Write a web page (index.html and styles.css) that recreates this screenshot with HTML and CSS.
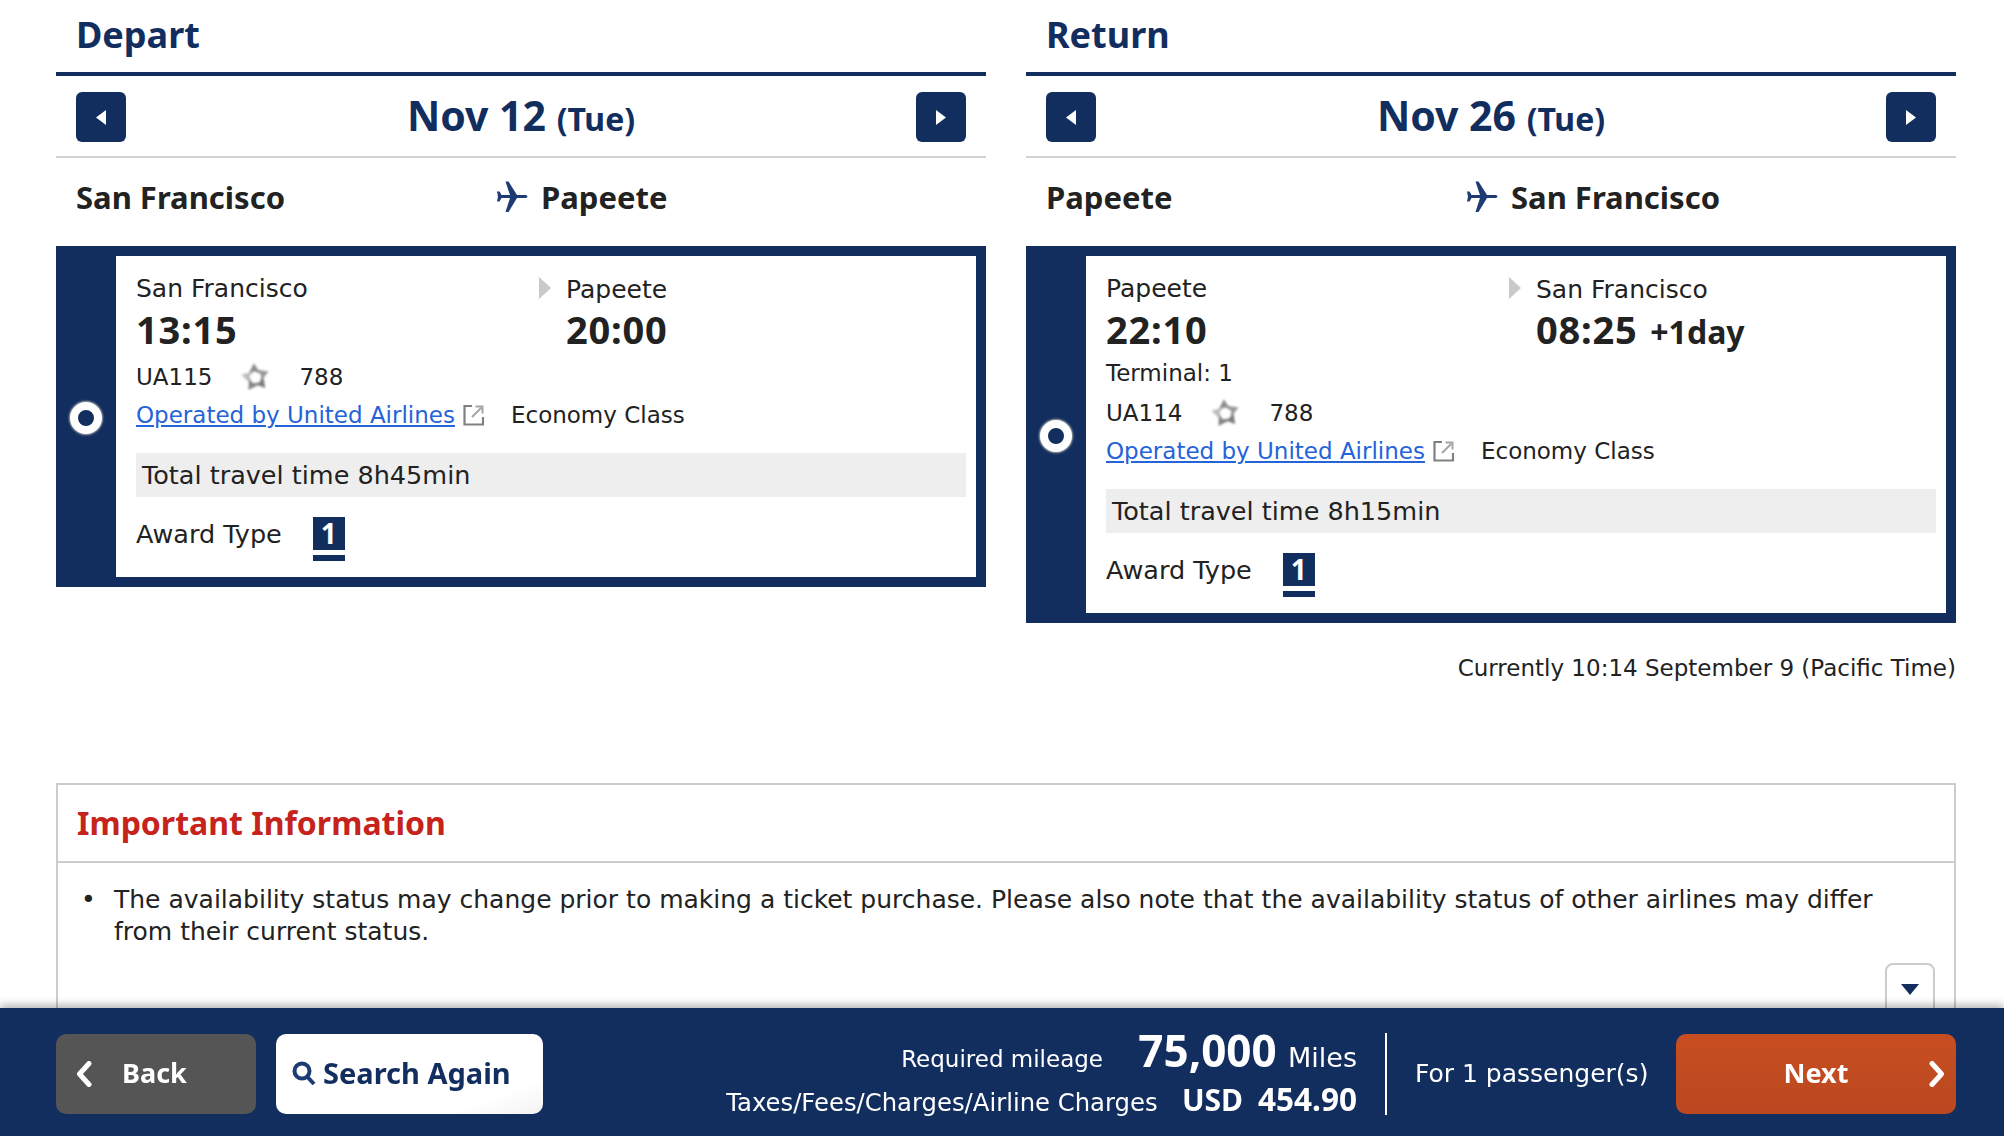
FILE: index.html
```html
<!DOCTYPE html>
<html lang="en">
<head>
    <meta charset="UTF-8">
    <meta name="viewport" content="width=device-width, initial-scale=1.0">
    <title>Select Flights</title>
    <link rel="stylesheet" href="styles.css">
</head>
<body>

    <svg class="defs" width="0" height="0">
        <defs>
            <symbol id="plane" viewBox="0 0 32 32">
                <path d="M0 10.5H2.5L4.5 14H13L8.5 .5H11.5L20 14H29Q32 15.5 29 17H20L11.5 31H8.5L13 17H4.5L2.5 20.5H0L1 15.5Z"/>
            </symbol>
            <symbol id="star" viewBox="0 0 30 30">
                <g filter="url(#soft)">
                    <polygon points="13.5,2 20,12 15,9.5 9,11" fill="#8c8c8c"/>
                    <polygon points="13.5,2 20,12 15,9.5 9,11" transform="rotate(72 15 15)" fill="#9a9a9a"/>
                    <polygon points="13.5,2 20,12 15,9.5 9,11" transform="rotate(144 15 15)" fill="#7c7c7c"/>
                    <polygon points="13.5,2 20,12 15,9.5 9,11" transform="rotate(216 15 15)" fill="#858585"/>
                    <polygon points="13.5,2 20,12 15,9.5 9,11" transform="rotate(288 15 15)" fill="#bcbcbc"/>
                </g>
            </symbol>
            <symbol id="external" viewBox="0 0 22 22">
                <path d="M9 2H1.5V20.5H20V13" fill="none" stroke="#808080" stroke-width="2.2"/>
                <path d="M9 13L18 4M12.5 2.5H19.5V9.5" fill="none" stroke="#a5a5a5" stroke-width="2"/>
            </symbol>
            <filter id="soft" x="-10%" y="-10%" width="120%" height="120%"><feGaussianBlur stdDeviation="1"/></filter>
        </defs>
    </svg>

    <div class="flights">

        <section class="leg">
            <h2 class="leg-title">Depart</h2>
            <div class="date-bar">
                <button class="nav-btn"><svg width="10" height="15" viewBox="0 0 10 15"><path d="M10 0V15L0 7.5Z"/></svg></button>
                <div class="date">Nov 12 <span class="weekday">(Tue)</span></div>
                <button class="nav-btn"><svg width="10" height="15" viewBox="0 0 10 15"><path d="M0 0V15L10 7.5Z"/></svg></button>
            </div>
            <div class="route">
                <span class="route-from">San Francisco</span>
                <svg class="route-plane"><use href="#plane"/></svg>
                <span>Papeete</span>
            </div>
            <div class="flight-card">
                <div class="card-side"><span class="radio"></span></div>
                <div class="card-body">
                    <div class="times">
                        <span class="place">San Francisco</span>
                        <svg class="stop-arrow" width="12" height="22" viewBox="0 0 12 22"><path d="M0 0L12 11L0 22Z"/></svg>
                        <span class="place place-arrive">Papeete</span>
                        <span class="time">13:15</span>
                        <span></span>
                        <span class="time">20:00</span>
                    </div>
                    <div class="flight-no">
                        <span>UA115</span>
                        <svg class="alliance"><use href="#star"/></svg>
                        <span>788</span>
                    </div>
                    <div class="operated">
                        <a href="#">Operated by United Airlines</a>
                        <svg class="ext-icon"><use href="#external"/></svg>
                        <span class="cabin">Economy Class</span>
                    </div>
                    <div class="travel-time">Total travel time 8h45min</div>
                    <div class="award">
                        <span class="award-label">Award Type</span>
                        <span class="award-badge">1</span>
                    </div>
                </div>
            </div>
        </section>

        <section class="leg">
            <h2 class="leg-title">Return</h2>
            <div class="date-bar">
                <button class="nav-btn"><svg width="10" height="15" viewBox="0 0 10 15"><path d="M10 0V15L0 7.5Z"/></svg></button>
                <div class="date">Nov 26 <span class="weekday">(Tue)</span></div>
                <button class="nav-btn"><svg width="10" height="15" viewBox="0 0 10 15"><path d="M0 0V15L10 7.5Z"/></svg></button>
            </div>
            <div class="route">
                <span class="route-from">Papeete</span>
                <svg class="route-plane"><use href="#plane"/></svg>
                <span>San Francisco</span>
            </div>
            <div class="flight-card">
                <div class="card-side"><span class="radio"></span></div>
                <div class="card-body">
                    <div class="times">
                        <span class="place">Papeete</span>
                        <svg class="stop-arrow" width="12" height="22" viewBox="0 0 12 22"><path d="M0 0L12 11L0 22Z"/></svg>
                        <span class="place place-arrive">San Francisco</span>
                        <span class="time">22:10</span>
                        <span></span>
                        <span class="time">08:25 <span class="plus-day">+1day</span></span>
                    </div>
                    <div class="terminal">Terminal: 1</div>
                    <div class="flight-no">
                        <span>UA114</span>
                        <svg class="alliance"><use href="#star"/></svg>
                        <span>788</span>
                    </div>
                    <div class="operated">
                        <a href="#">Operated by United Airlines</a>
                        <svg class="ext-icon"><use href="#external"/></svg>
                        <span class="cabin">Economy Class</span>
                    </div>
                    <div class="travel-time">Total travel time 8h15min</div>
                    <div class="award">
                        <span class="award-label">Award Type</span>
                        <span class="award-badge">1</span>
                    </div>
                </div>
            </div>
            <p class="current-time">Currently 10:14 September 9 (Pacific Time)</p>
        </section>

    </div>

    <section class="info-box">
        <h3 class="info-title">Important Information</h3>
        <ul class="info-list">
            <li>The availability status may change prior to making a ticket purchase. Please also note that the availability status of other airlines may differ from their current status.</li>
        </ul>
        <button class="more-btn"><svg width="18" height="11" viewBox="0 0 18 11"><path d="M0 0H18L9 11Z"/></svg></button>
    </section>

    <footer class="footer">
        <button class="btn btn-back">
            <svg class="chevron" width="16" height="26" viewBox="0 0 16 26"><path d="M13 2.5L3.5 13L13 23.5"/></svg>
            <span>Back</span>
        </button>
        <button class="btn btn-search">
            <svg width="24" height="26" viewBox="0 0 24 26"><circle cx="10" cy="10" r="7.5"/><path d="M15.5 16L22 23"/></svg>
            <span>Search Again</span>
        </button>
        <div class="summary">
            <div class="summary-line">
                <span class="label">Required mileage</span>
                <span class="miles">75,000</span>
                <span class="miles-unit">Miles</span>
            </div>
            <div class="summary-line">
                <span class="label label-long">Taxes/Fees/Charges/Airline Charges</span>
                <span class="price">USD<span class="price-value">454.90</span></span>
            </div>
        </div>
        <div class="passengers">For 1 passenger(s)</div>
        <button class="btn btn-next">
            <span>Next</span>
            <svg class="chevron" width="16" height="26" viewBox="0 0 16 26"><path d="M3 2.5L12.5 13L3 23.5"/></svg>
        </button>
    </footer>

</body>
</html>
```

FILE: styles.css
```css
* {
    box-sizing: border-box;
}

body {
    margin: 0;
    height: 1136px;
    overflow: hidden;
    background: white;
    color: #222;
    font-family: "DejaVu Sans", sans-serif;
    font-size: 23px;
}

.defs {
    position: absolute;
}

.flights {
    display: flex;
    gap: 40px;
    height: 783px;
    padding: 0 48px 0 56px;
}

.leg {
    flex: 1;
    min-width: 0;
}

.leg-title {
    height: 76px;
    margin: 0;
    padding: 13px 20px 0;
    border-bottom: 4px solid #122e5f;
    color: #122e5f;
    font-family: "Noto Sans", sans-serif;
    font-size: 36px;
    line-height: 44px;
}

.date-bar {
    display: flex;
    justify-content: space-between;
    align-items: center;
    height: 82px;
    padding: 2px 20px 0;
    border-bottom: 2px solid #d2d2d2;
}

.nav-btn {
    display: flex;
    justify-content: center;
    align-items: center;
    width: 50px;
    height: 50px;
    padding: 0;
    border: none;
    border-radius: 6px;
    background: #122e5f;
    fill: white;
}

.date {
    padding-bottom: 5px;
    color: #122e5f;
    font-family: "Noto Sans", sans-serif;
    font-size: 41px;
    font-weight: bold;
}

.weekday {
    font-size: 32px;
}

.route {
    display: flex;
    align-items: center;
    height: 88px;
    padding: 0 0 10px 20px;
    font-family: "Noto Sans", sans-serif;
    font-size: 31px;
    font-weight: bold;
}

.route-from {
    width: 421px;
}

.route-plane {
    width: 32px;
    height: 32px;
    margin-right: 12px;
    fill: #1c3c73;
}

.flight-card {
    display: flex;
    border: 10px solid #122e5f;
    border-left: none;
}

.card-side {
    display: flex;
    justify-content: center;
    align-items: center;
    flex: none;
    width: 60px;
    padding-top: 2px;
    background: #122e5f;
}

.radio {
    width: 32px;
    height: 32px;
    border: 8px solid white;
    border-radius: 50%;
    background: #122e5f;
    box-shadow: 0 0 2px 1px #aaa;
}

.card-body {
    flex: 1;
    min-width: 0;
    padding: 12px 10px 16px 20px;
}

.times {
    display: grid;
    grid-template-columns: 403px 27px 1fr;
    grid-template-rows: 40px 46px;
    align-items: center;
}

.place {
    font-size: 25px;
}

.place-arrive {
    padding-top: 3px;
}

.stop-arrow {
    fill: #c9c9c9;
}

.time {
    padding-bottom: 4px;
    font-family: "Noto Sans", sans-serif;
    font-size: 38px;
    font-weight: bold;
    letter-spacing: 0.8px;
}

.plus-day {
    margin-left: 2px;
    font-size: 32px;
    letter-spacing: 0;
}

.terminal {
    height: 36px;
    margin-top: 4px;
    line-height: 30px;
}

.flight-no {
    display: flex;
    align-items: center;
    gap: 27px;
    height: 38px;
    margin-top: 4px;
}

.terminal + .flight-no {
    margin-top: 0;
}

.alliance {
    width: 33px;
    height: 33px;
}

.operated {
    display: flex;
    align-items: center;
    height: 38px;
}

.operated a {
    color: #2563d8;
}

.ext-icon {
    width: 22px;
    height: 22px;
    margin-left: 8px;
}

.cabin {
    margin-left: 26px;
}

.travel-time {
    height: 44px;
    margin-top: 19px;
    padding-left: 6px;
    background: #eee;
    font-size: 25.5px;
    line-height: 45px;
}

.award {
    display: flex;
    align-items: center;
    gap: 31px;
    margin-top: 20px;
    font-size: 25.5px;
}

.award-label {
    padding-bottom: 10px;
}

.award-badge {
    width: 32px;
    height: 44px;
    border-bottom: 6px solid #122e5f;
    background: linear-gradient(#122e5f 33px, white 33px);
    color: white;
    font-family: "Noto Sans", sans-serif;
    font-size: 28px;
    font-weight: bold;
    line-height: 32px;
    text-align: center;
}

.current-time {
    margin: 28px 0 0;
    line-height: 34px;
    text-align: right;
}

.info-box {
    position: relative;
    height: 300px;
    margin: 0 48px 0 56px;
    border: 2px solid #ccc;
}

.info-title {
    height: 78px;
    margin: 0;
    padding-left: 19px;
    border-bottom: 2px solid #ccc;
    color: #c5231c;
    font-family: "Noto Sans", sans-serif;
    font-size: 32px;
    line-height: 76px;
}

.info-list {
    margin: 0;
    padding: 21px 60px 0 23px;
    list-style: none;
    font-size: 25px;
    line-height: 32px;
}

.info-list li {
    display: flex;
}

.info-list li::before {
    content: "•";
    flex: none;
    width: 33px;
}

.more-btn {
    display: flex;
    justify-content: center;
    align-items: flex-start;
    position: absolute;
    top: 178px;
    right: 19px;
    width: 50px;
    height: 70px;
    padding: 19px 0 0;
    border: 2px solid #ccc;
    border-radius: 8px;
    background: white;
    fill: #122e5f;
}

.footer {
    position: fixed;
    left: 0;
    right: 0;
    bottom: 0;
    display: flex;
    align-items: center;
    height: 128px;
    padding: 4px 48px 0 56px;
    background: #122e5f;
    box-shadow: 0 -3px 8px rgba(0, 0, 0, 0.3);
    color: white;
}

.btn {
    display: flex;
    align-items: center;
    height: 80px;
    padding: 0;
    border: none;
    border-radius: 10px;
    font-family: "Noto Sans", sans-serif;
    font-size: 27px;
    font-weight: bold;
}

.btn span {
    margin-bottom: 3px;
}

.chevron {
    fill: none;
    stroke: white;
    stroke-width: 5;
    stroke-linecap: round;
    stroke-linejoin: round;
}

.btn-back {
    gap: 30px;
    width: 200px;
    padding-left: 20px;
    background: #555;
    color: white;
}

.btn-search {
    gap: 7px;
    width: 267px;
    margin-left: 20px;
    padding-left: 16px;
    background: linear-gradient(160deg, white 80%, #f3f3f3);
    color: #122e5f;
    font-size: 29px;
}

.btn-search svg {
    fill: none;
    stroke: #1c3c73;
    stroke-width: 4;
}

.summary {
    flex: 1;
    margin-top: 5px;
    padding-right: 28px;
}

.summary-line {
    height: 44px;
    line-height: 44px;
    text-align: right;
    white-space: nowrap;
}

.summary-line:first-child {
    margin-bottom: 9px;
}

.label-long {
    font-size: 24.3px;
}

.miles {
    margin-left: 28px;
    font-family: "Noto Sans", sans-serif;
    font-size: 44px;
    font-weight: bold;
    line-height: 1;
}

.miles-unit {
    margin-left: 4px;
    font-size: 27px;
    line-height: 1;
}

.price {
    margin-left: 17px;
    font-family: "Noto Sans", sans-serif;
    font-size: 30px;
    font-weight: bold;
    line-height: 1;
}

.price-value {
    margin-left: 15px;
    font-size: 31.5px;
}

.passengers {
    flex: none;
    width: 291px;
    height: 82px;
    padding-left: 28px;
    border-left: 2px solid white;
    font-size: 25px;
    line-height: 82px;
}

.btn-next {
    position: relative;
    justify-content: center;
    width: 280px;
    background: linear-gradient(#c74e20, #bb4820);
    color: white;
}

.btn-next .chevron {
    position: absolute;
    right: 11px;
    top: 27px;
}
```
